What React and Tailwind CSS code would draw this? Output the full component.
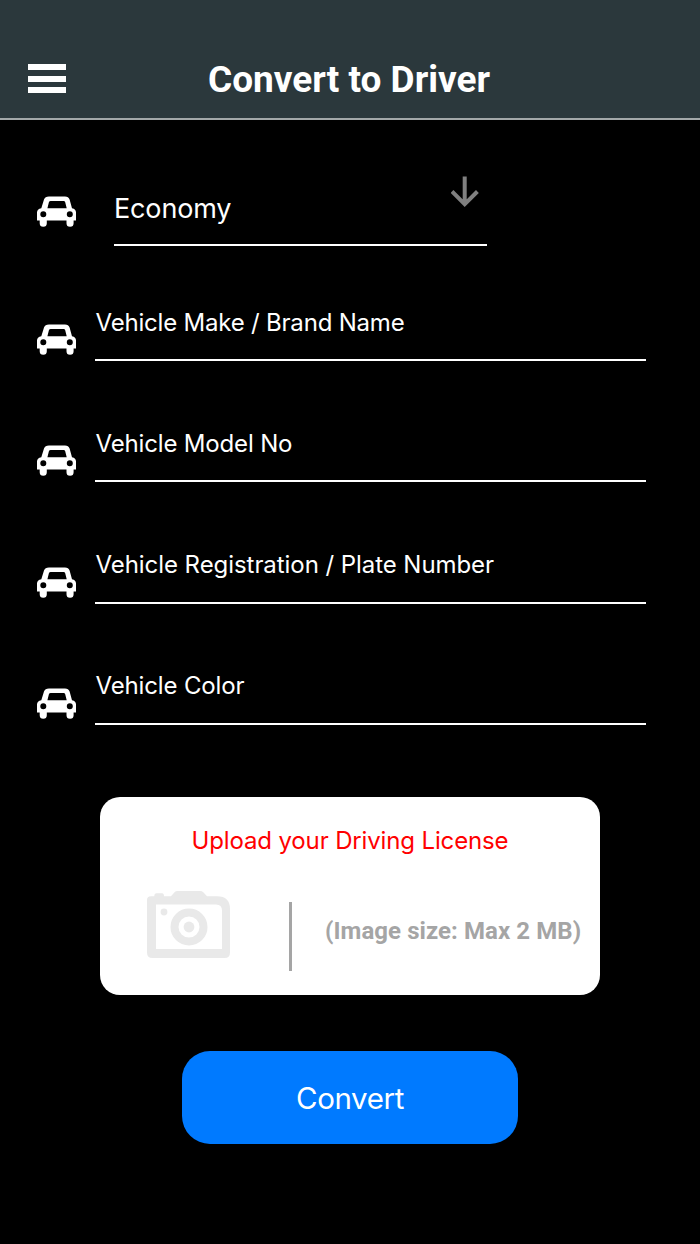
function CarIcon({ className }) {
  return (
    <svg viewBox="0 0 39 31" fill="#fff" className={`h-[31px] w-[39px] shrink-0 ${className}`}>
      <path
        fillRule="evenodd"
        d="M12 0.5H28Q31.5 0.5 32.6 3.6L35 12.3Q39 13.2 39 16.5V24.5H36.6V27.3A3.5 3.5 0 0 1 29.5 27.3V24.5H9.8V27.3A3.5 3.5 0 0 1 2.7 27.3V24.5H0V16.5Q0 13.2 4.3 12.3L7 3.6Q8 0.5 12 0.5ZM13.7 5Q12.3 5 11.9 6.2L10.4 12.3H29.7L28.2 6.2Q27.9 5 26.5 5ZM6.3 15.3A3 3 0 1 0 6.3 21.3A3 3 0 1 0 6.3 15.3ZM32.8 15.3A3 3 0 1 0 32.8 21.3A3 3 0 1 0 32.8 15.3Z"
      />
    </svg>
  );
}

function CameraIcon() {
  return (
    <svg viewBox="0 0 83 67" fill="#e9e9e9" className="h-[67px] w-[83px]">
      <path
        fillRule="evenodd"
        d="M4 5.3H7.3Q7.3 2.3 9.5 2.3H15Q17 2.3 17 5.3H24L27.5 1.3Q28.7 0 30.5 0H53Q55 0 56.3 1.3L60 5.3H70Q83 5.3 83 18V61.5Q83 67 77.5 67H5.5Q0 67 0 61.5V9Q0 5.3 4 5.3ZM9 13.5V58H75V19.5Q75 13.5 69 13.5Z"
      />
      <circle cx="17" cy="21" r="3.4" />
      <circle cx="42" cy="36" r="14.5" fill="none" stroke="#e9e9e9" strokeWidth="8" />
      <circle cx="42" cy="36" r="5.4" />
    </svg>
  );
}

const fields = [
  { label: "Vehicle Make / Brand Name", tracking: "tracking-[-0.2px]" },
  { label: "Vehicle Model No", tracking: "tracking-[-0.16px]" },
  { label: "Vehicle Registration / Plate Number", tracking: "tracking-[-0.06px]" },
  { label: "Vehicle Color", tracking: "tracking-[-0.15px]" },
];

export default function App() {
  return (
    <div className="flex h-[1244px] w-[700px] flex-col bg-black font-['Inter',sans-serif] text-white">
      <header className="flex h-[120px] shrink-0 items-start border-b-2 border-[#a3a8a9] bg-[#2b383c] pl-7">
        <button className="mt-16 flex w-[38px] flex-col gap-[5.5px]" aria-label="Menu">
          <span className="h-[6px] bg-white" />
          <span className="h-[6px] bg-white" />
          <span className="h-[6px] bg-white" />
        </button>
        <h1 className="mt-[56px] ml-[142px] font-['Roboto',sans-serif] text-[37px] leading-[48px] font-bold whitespace-nowrap">
          Convert to Driver
        </h1>
      </header>

      <main className="flex flex-col">
        <div className="flex h-[126px] pl-[37px]">
          <CarIcon className="mt-[76px]" />
          <div className="ml-[38px] flex h-[126px] w-[373px] justify-between border-b-2 border-white">
            <span className="mt-[71px] text-[27px] leading-9 tracking-[-0.15px] whitespace-nowrap">Economy</span>
            <svg viewBox="0 0 28 32" fill="none" stroke="#808080" strokeWidth="4" className="mt-[56px] mr-[8px] h-8 w-7">
              <path d="M13.7 0.5V28M1 15.5L13.7 28.2L26.4 15.5" />
            </svg>
          </div>
        </div>

        <div className="-mt-[6px] flex flex-col">
          {fields.map((f) => (
            <label key={f.label} className="flex h-[121.2px] items-end pl-[37px]">
              <CarIcon className="mb-[6px]" />
              <span className="ml-[19px] flex h-[60px] w-[551px] border-b-2 border-white">
                <span className={`mt-[5.5px] ml-[0.5px] text-[24px] leading-[32px] whitespace-nowrap ${f.tracking}`}>{f.label}</span>
              </span>
            </label>
          ))}
        </div>

        <section className="mt-[72px] ml-[100px] flex h-[198px] w-[500px] flex-col rounded-[20px] bg-white">
          <p className="mt-[28px] text-center text-[24px] leading-8 tracking-[-0.14px] text-[#ff0000]">Upload your Driving License</p>
          <div className="flex pl-[47px]">
            <div className="mt-[34px]">
              <CameraIcon />
            </div>
            <div className="mt-[45px] ml-[59px] h-[69px] w-[3px] bg-[#a5a5a5]" />
            <p className="mt-[58px] ml-[33px] font-['Roboto',sans-serif] text-[24px] leading-8 font-bold tracking-[0.07px] whitespace-nowrap text-[#a5a5a5]">
              (Image size: Max 2 MB)
            </p>
          </div>
        </section>

        <button className="mt-[56px] ml-[182px] h-[93px] w-[336px] rounded-[28px] bg-[#007aff] pt-[2px] text-[29.5px] tracking-[-0.4px]">
          Convert
        </button>
      </main>
    </div>
  );
}
